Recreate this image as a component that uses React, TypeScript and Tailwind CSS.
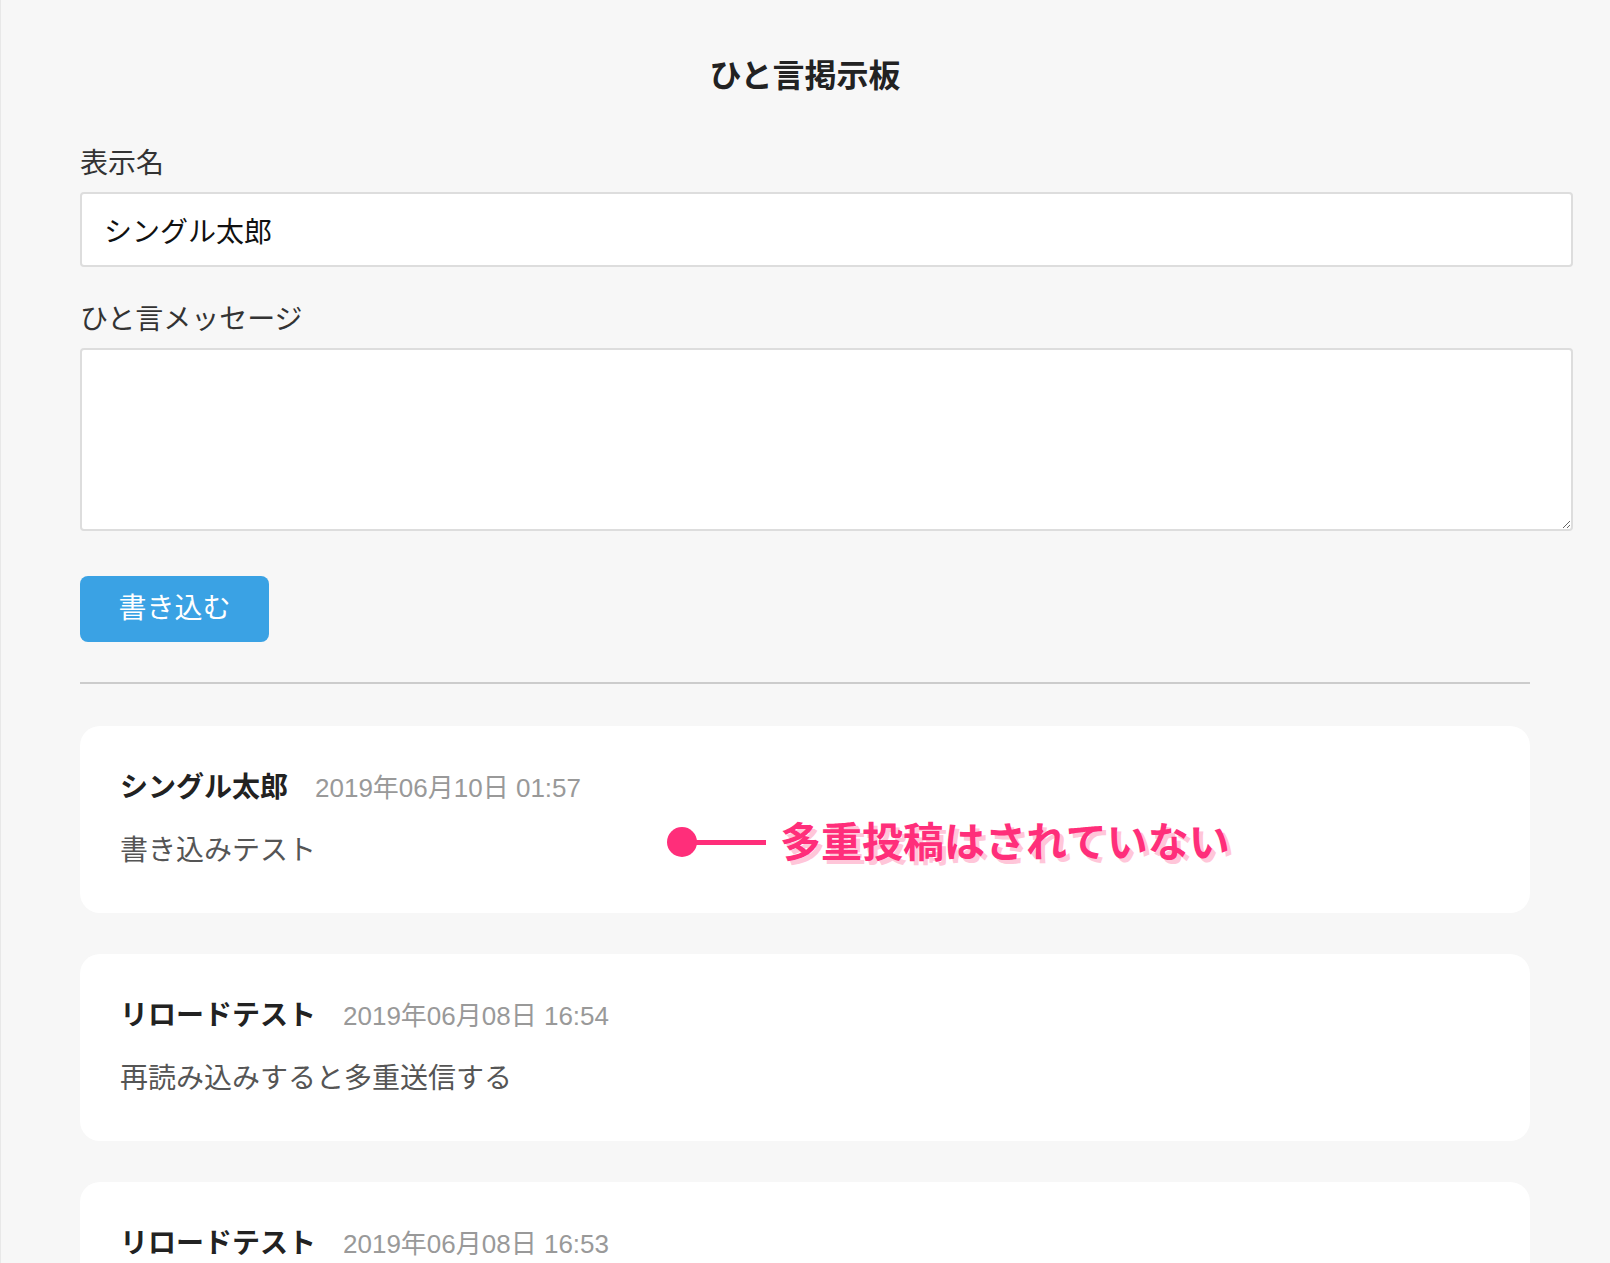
import React from "react";

const posts = [
  { name: "シングル太郎", date: "2019年06月10日 01:57", message: "書き込みテスト", note: true },
  { name: "リロードテスト", date: "2019年06月08日 16:54", message: "再読み込みすると多重送信する" },
  { name: "リロードテスト", date: "2019年06月08日 16:53", message: "再読み込みすると多重送信する" },
];

export default function App() {
  return (
    <div className="min-h-screen bg-[#f7f7f7] shadow-[inset_1px_0_0_#e8e8e8] font-['Liberation_Sans','Noto_Sans_CJK_JP',sans-serif] pb-[60px]">
      <div className="mx-auto w-[1450px] pt-[52px]">
        <h1 className="text-center text-[32px] leading-[48px] font-bold text-[#222]">ひと言掲示板</h1>

        <form onSubmit={(e) => e.preventDefault()}>
          <label className="block mt-[44px] text-[28px] leading-[39px] text-[#333]">表示名</label>
          <input
            type="text"
            defaultValue="シングル太郎"
            className="block mt-[9px] w-[1493px] h-[75px] bg-white border-2 border-[#dddddd] rounded-[4px] px-[22px] text-[28px] text-[#111] outline-none"
          />
          <label className="block mt-[33px] text-[28px] leading-[39px] text-[#333]">ひと言メッセージ</label>
          <textarea className="block mt-[9px] w-[1493px] h-[183px] bg-white border-2 border-[#dddddd] rounded-[4px] px-[22px] py-[16px] text-[28px] text-[#111] outline-none" />
          <button
            type="submit"
            className="block mt-[45px] w-[189px] h-[66px] rounded-[8px] bg-[#3aa2e4] text-white text-[28px] leading-none"
          >
            書き込む
          </button>
        </form>

        <div className="mt-[40px] h-[2px] bg-[#cccccc]" />

        <div className="mt-[42px] flex flex-col gap-[41px]">
          {posts.map((p, i) => (
            <div key={i} className="relative bg-white rounded-[20px] p-[40px]">
              <div className="flex items-baseline leading-[44px]">
                <span className="text-[28px] font-bold text-[#222]">{p.name}</span>
                <span className="ml-[27px] text-[26px] text-[#999]">{p.date}</span>
              </div>
              <p className="mt-[19px] text-[28px] leading-[44px] text-[#555]">{p.message}</p>
              {p.note && (
                <div className="absolute left-[587px] top-[86px] h-[60px] flex items-center">
                  <div className="w-[30px] h-[30px] rounded-full bg-[#ff2e7a]" />
                  <div className="w-[70px] h-[5px] bg-[#ff2e7a] -ml-[1px]" />
                  <span className="ml-[14px] -mt-[5px] text-[41px] leading-none font-bold text-[#ff2e7a] [text-shadow:4px_4px_0_#ffc6d9] font-['Noto_Sans_CJK_JP',sans-serif]">
                    多重投稿はされていない
                  </span>
                </div>
              )}
            </div>
          ))}
        </div>
      </div>
    </div>
  );
}
